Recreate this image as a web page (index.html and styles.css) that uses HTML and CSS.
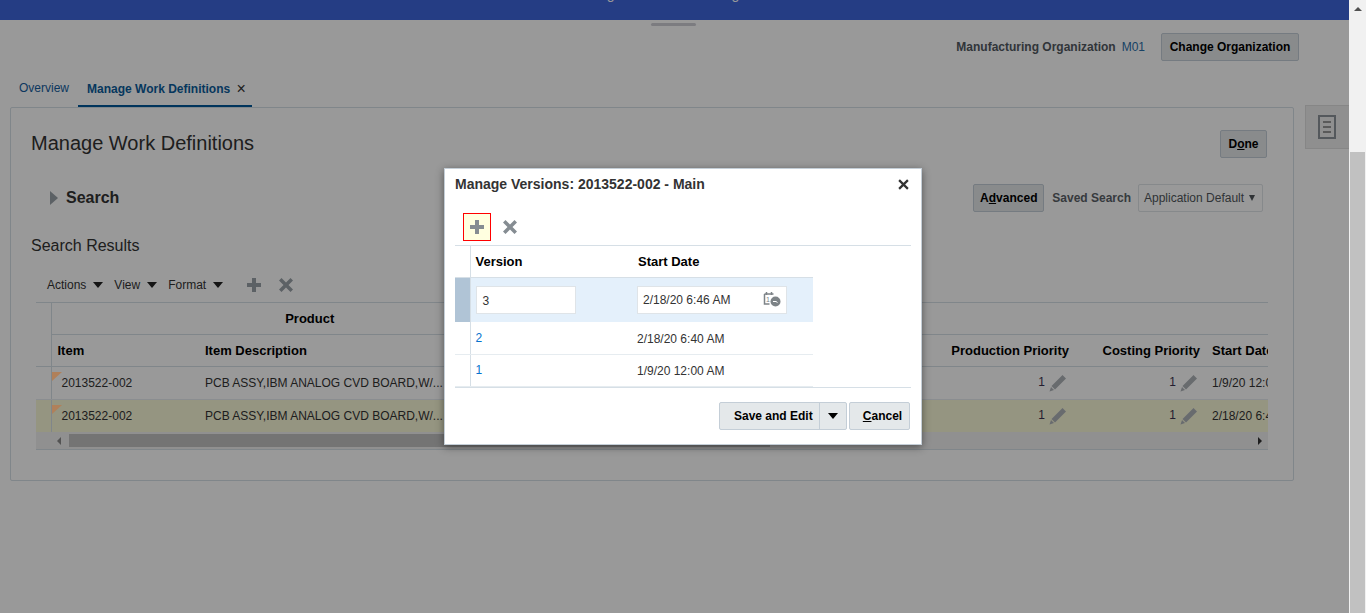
FILE: index.html
```html
<!DOCTYPE html>
<html>
	<head>
		<meta charset="utf-8">
		<title>Manage Work Definitions</title>
		<link rel="stylesheet" href="styles.css">
	</head>
	<body>
		<div class="page">
			<div class="main">
				<div class="banner" aria-hidden="true"><span>g</span><span>g</span></div>
				<div class="handle"></div>
				<div class="org">
					<span class="org-label">Manufacturing Organization</span>
					<span class="org-value">M01</span>
					<button class="btn btn-org">Change Organization</button>
				</div>
				<div class="work">
					<div class="work-left">
						<div class="tabs">
							<a class="tab">Overview</a>
							<a class="tab tab-on">Manage Work Definitions <i class="tab-x">×</i></a>
						</div>
						<div class="panel">
							<div class="panel-head">
								<h1>Manage Work Definitions</h1>
								<button class="btn btn-done">D<u>o</u>ne</button>
							</div>
							<div class="search-row">
								<span class="tri-right"></span>
								<h2>Search</h2>
								<button class="btn btn-adv">A<u>d</u>vanced</button>
								<span class="saved">Saved Search</span>
								<div class="select">Application Default <span class="select-arrow"></span></div>
							</div>
							<h3>Search Results</h3>
							<div class="toolbar">
								<span class="menu">Actions<i class="arrow"></i></span>
								<span class="menu">View<i class="arrow"></i></span>
								<span class="menu">Format<i class="arrow"></i></span>
								<svg class="ic ic-first" viewBox="0 0 16 16"><path d="M6 1h4v5h5v4h-5v5H6v-5H1V6h5z"/></svg>
								<svg class="ic" viewBox="0 0 16 16"><path d="M3.500 1 8 5.500 12.500 1 15 3.500 10.500 8 15 12.500 12.500 15 8 10.500 3.500 15 1 12.500 5.500 8 1 3.500z"/></svg>
							</div>
							<div class="grid-wrap">
								<table class="grid">
									<colgroup>
										<col class="c-head"><col class="c-item"><col class="c-desc"><col class="c-rest"><col class="c-gap"><col class="c-prod"><col class="c-cost"><col class="c-date">
									</colgroup>
									<tr class="group-row">
										<th class="rowhead" rowspan="2"></th>
										<th class="center" colspan="3">Product</th>
										<th colspan="4"></th>
									</tr>
									<tr class="label-row">
										<th class="item-head">Item</th>
										<th>Item Description</th>
										<th></th>
										<th></th>
										<th class="right">Production Priority</th>
										<th class="right">Costing Priority</th>
										<th>Start Date</th>
									</tr>
									<tr>
										<td class="rowhead"></td>
										<td class="flagged">2013522-002</td>
										<td>PCB ASSY,IBM ANALOG CVD BOARD,W/...</td>
										<td></td>
										<td></td>
										<td class="right"><span class="num">1</span><svg class="pencil" viewBox="0 0 18 18"><path d="M13.500 1 17 4.500 6 15.500 2.500 12zM2 13l3 3-4.500 1.500z"/></svg></td>
										<td class="right"><span class="num">1</span><svg class="pencil" viewBox="0 0 18 18"><path d="M13.500 1 17 4.500 6 15.500 2.500 12zM2 13l3 3-4.500 1.500z"/></svg></td>
										<td>1/9/20 12:00 AM</td>
									</tr>
									<tr class="row-on">
										<td class="rowhead"></td>
										<td class="flagged">2013522-002</td>
										<td>PCB ASSY,IBM ANALOG CVD BOARD,W/...</td>
										<td></td>
										<td></td>
										<td class="right"><span class="num">1</span><svg class="pencil" viewBox="0 0 18 18"><path d="M13.500 1 17 4.500 6 15.500 2.500 12zM2 13l3 3-4.500 1.500z"/></svg></td>
										<td class="right"><span class="num">1</span><svg class="pencil" viewBox="0 0 18 18"><path d="M13.500 1 17 4.500 6 15.500 2.500 12zM2 13l3 3-4.500 1.500z"/></svg></td>
										<td>2/18/20 6:46 AM</td>
									</tr>
								</table>
								<div class="hscroll">
									<i class="hs-left"></i>
									<div class="hs-thumb"></div>
									<i class="hs-right"></i>
								</div>
							</div>
						</div>
					</div>
					<div class="side-tab">
						<svg viewBox="0 0 18 24" width="18" height="24"><path d="M1 1h16v22H1z" fill="none" stroke="#8c9399" stroke-width="2"/><path d="M5 7h8M5 12h8M5 17h8" stroke="#969696" stroke-width="2"/></svg>
					</div>
				</div>
				<div class="overlay"></div>
				<div class="modal">
					<div class="modal-title">
						<span>Manage Versions: 2013522-002 - Main</span>
						<svg class="close" viewBox="0 0 10 10"><path d="M1 1l8 8M9 1l-8 8" stroke="#333" stroke-width="2"/></svg>
					</div>
					<div class="modal-tools">
						<span class="tool tool-on"><svg class="ic" viewBox="0 0 16 16"><path d="M6 1h4v5h5v4h-5v5H6v-5H1V6h5z"/></svg></span>
						<span class="tool"><svg class="ic" viewBox="0 0 16 16"><path d="M3.500 1 8 5.500 12.500 1 15 3.500 10.500 8 15 12.500 12.500 15 8 10.500 3.500 15 1 12.500 5.500 8 1 3.500z"/></svg></span>
					</div>
					<div class="versions-wrap">
						<table class="versions">
							<tr class="v-head">
								<th class="v-side"></th>
								<th class="v-ver">Version</th>
								<th class="v-date">Start Date</th>
							</tr>
							<tr class="v-edit">
								<td class="v-side"></td>
								<td class="v-ver"><div class="field field-ver">3</div></td>
								<td class="v-date"><div class="field field-date">2/18/20 6:46 AM
									<svg class="cal" viewBox="0 0 18 16" width="18" height="16"><path d="M1.500 3h9M1.500 3v10h5M3.500 1v3M8.500 1v3" fill="none" stroke="#7d8387" stroke-width="1.500"/><text class="cal-day" x="3" y="11">1</text><circle cx="12.500" cy="10.500" r="5" fill="#7d8387"/><path d="M10 10.500h3l1.500 1" fill="none" stroke="#fff"/></svg>
								</div></td>
							</tr>
							<tr>
								<td class="v-side"></td>
								<td class="v-ver"><a class="link">2</a></td>
								<td class="v-date">2/18/20 6:40 AM</td>
							</tr>
							<tr>
								<td class="v-side"></td>
								<td class="v-ver"><a class="link">1</a></td>
								<td class="v-date">1/9/20 12:00 AM</td>
							</tr>
						</table>
					</div>
					<div class="modal-foot">
						<div class="split">
							<span class="split-main">Save and Edit</span>
							<span class="split-arrow"><i class="arrow arrow-dark"></i></span>
						</div>
						<button class="btn btn-cancel"><u>C</u>ancel</button>
					</div>
				</div>
			</div>
			<div class="vscroll">
				<i class="vs-up"></i>
				<div class="vs-thumb"></div>
			</div>
		</div>
	</body>
</html>
```

FILE: styles.css
```css
*{
	margin: 0;
	padding: 0;
	box-sizing: border-box;
}
body{
	font-family: "Liberation Sans", Arial, sans-serif;
	font-size: 12px;
	color: #333;
	background: #fff;
	overflow: hidden;
}
.page{
	display: flex;
	height: 613px;
	overflow: hidden;
}
.main{
	position: relative;
	flex: 1;
	min-width: 0;
}
.vscroll{
	width: 17px;
	background: #f1f1f1;
	display: flex;
	flex-direction: column;
	align-items: center;
}
.vs-up{
	margin-top: 7px;
	border-left: 4px solid transparent;
	border-right: 4px solid transparent;
	border-bottom: 4px solid #505050;
}
.vs-thumb{
	width: 15px;
	margin-top: 141px;
	flex: 1;
	background: #c1c1c1;
}

/* top of the page */
.banner{
	height: 20px;
	background: #3e66dd;
	overflow: hidden;
	display: flex;
	justify-content: center;
	gap: 117px;
	padding-right: 3px;
	color: #fff;
	font-size: 14px;
	line-height: 14px;
	margin-bottom: 3px;
}
.banner span{
	margin-top: -13px;
}
.handle{
	width: 45px;
	height: 3px;
	margin-left: 651px;
	border-radius: 2px;
	background: #cfcfd6;
}
.org{
	display: flex;
	justify-content: flex-end;
	align-items: center;
	height: 28px;
	margin-top: 7px;
	padding-right: 50px;
}
.org-label{
	font-weight: bold;
	color: #52595f;
}
.org-value{
	margin-left: 6px;
	color: #2a6ea8;
}
.btn{
	font-family: inherit;
	font-size: 12px;
	font-weight: bold;
	color: #000;
	height: 28px;
	border: 1px solid #c4ced7;
	border-radius: 2px;
	background: #e4e8ea;
}
.btn-org{
	width: 138px;
	margin-left: 16px;
}

/* tabs and panel */
.work{
	display: flex;
	gap: 11px;
	margin-top: 11px;
	padding-left: 10px;
}
.work-left{
	width: 1284px;
}
.tabs{
	display: flex;
	height: 35px;
	padding-left: 9px;
}
.tab{
	height: 35px;
	line-height: 33px;
	color: #145c9e;
	margin-right: 9px;
}
.tab-on{
	padding: 0 6px 0 9px;
	font-weight: bold;
	color: #0a5c9c;
	border-bottom: 2px solid #00589a;
}
.tab-x{
	font-style: normal;
	font-weight: normal;
	font-size: 16px;
	color: #333;
	margin-left: 3px;
	vertical-align: -1px;
}
.panel{
	height: 374px;
	border: 1px solid #d6dfe6;
	border-radius: 2px;
	padding: 22px 26px 0 20px;
}
.panel-head{
	display: flex;
	justify-content: space-between;
	align-items: center;
	height: 28px;
}
h1{
	font-size: 20px;
	font-weight: normal;
	margin-top: -2px;
}
.btn-done{
	width: 47px;
}
.search-row{
	display: flex;
	align-items: center;
	height: 28px;
	margin-top: 26px;
	padding-left: 19px;
	margin-right: 4px;
}
.tri-right{
	border-top: 7px solid transparent;
	border-bottom: 7px solid transparent;
	border-left: 8px solid #9aa2a8;
}
h2{
	font-size: 16px;
	margin-left: 8px;
	margin-right: auto;
}
.btn-adv{
	width: 71px;
}
.saved{
	margin-left: 8px;
	font-weight: bold;
	color: #5b6268;
}
.select{
	width: 125px;
	height: 28px;
	margin-left: 7px;
	padding-left: 5px;
	line-height: 26px;
	border: 1px solid #dfe4e8;
	border-radius: 2px;
	color: #50565b;
	background: #fff;
}
.select-arrow{
	display: inline-block;
	margin-left: 2px;
	vertical-align: 1px;
	border-left: 3px solid transparent;
	border-right: 3px solid transparent;
	border-top: 6px solid #50565b;
}
h3{
	font-size: 16px;
	font-weight: normal;
	line-height: 18px;
	margin-top: 25px;
}
.toolbar{
	display: flex;
	align-items: center;
	height: 22px;
	margin-top: 19px;
	padding-left: 16px;
}
.toolbar .ic{
	fill: #9aa2a8;
}
.menu{
	display: flex;
	align-items: center;
	margin-right: 11px;
}
.arrow{
	display: block;
	margin-left: 7px;
	border-left: 5px solid transparent;
	border-right: 5px solid transparent;
	border-top: 6px solid #222;
}
.ic{
	width: 16px;
	height: 16px;
	fill: #858c92;
	margin-right: 16px;
	display: block;
}
.ic-first{
	margin-left: 12px;
}

/* results table */
.grid-wrap{
	width: 1232px;
	margin-left: 5px;
	margin-top: 6px;
	overflow: hidden;
	border-top: 1px solid #d6dfe6;
	border-bottom: 1px solid #d6dfe6;
}
.grid{
	width: 1270px;
	table-layout: fixed;
	border-collapse: collapse;
}
.c-head{width: 15px;}
.c-item{width: 149px;}
.c-desc{width: 245px;}
.c-rest{width: 124px;}
.c-gap{width: 361px;}
.c-prod{width: 145px;}
.c-cost{width: 131px;}
.c-date{width: 100px;}
.grid th{
	height: 32px;
	padding: 0 6px 0 5px;
	text-align: left;
	font-size: 13px;
	color: #000;
	border-bottom: 1px solid #d6dfe6;
	white-space: nowrap;
	overflow: hidden;
}
.grid .group-row th{
	height: 31px;
}
.grid td{
	height: 33px;
	padding: 0 6px 0 5px;
	border-bottom: 1px solid #e6ecf0;
	white-space: nowrap;
	overflow: hidden;
}
.grid tr > :last-child{
	padding-left: 6px;
}
.grid .center{
	text-align: center;
}
.grid .right{
	text-align: right;
}
.grid td.right{
	padding-right: 8px;
}
.grid .rowhead{
	padding: 0;
	border-right: 1px solid #d6dfe6;
}
.grid th.item-head{
	padding-left: 6px;
}
.grid td.flagged{
	position: relative;
	padding-left: 10px;
}
/* sits above the dimming layer, it keeps its brighter colour there */
.flagged:before{
	content: "";
	position: absolute;
	z-index: 1;
	left: 0;
	top: 5px;
	border-top: 9px solid #b0805a;
	border-right: 10px solid transparent;
}
.row-on td{
	background: #f9f8d8;
	border-bottom: 0;
}
.num{
	color: #3b3350;
	margin-right: 4px;
}
.pencil{
	width: 18px;
	height: 18px;
	fill: #aeb3b8;
	vertical-align: middle;
}
.hscroll{
	display: flex;
	align-items: center;
	height: 17px;
	background: #f0f0f0;
	padding-left: 16px;
}
.hs-left{
	margin-left: 5px;
	border-top: 4px solid transparent;
	border-bottom: 4px solid transparent;
	border-right: 4px solid #8a8a8a;
}
.hs-thumb{
	width: 701px;
	height: 13px;
	margin-left: 8px;
	background: #c1c1c1;
}
.hs-right{
	margin-left: auto;
	margin-right: 6px;
	border-top: 4px solid transparent;
	border-bottom: 4px solid transparent;
	border-left: 4px solid #333;
}
.side-tab{
	width: 44px;
	height: 44px;
	margin-top: 33px;
	padding-right: 2px;
	background: #efefef;
	border: 1px solid #e0e0e0;
	border-right: 0;
	display: flex;
	align-items: center;
	justify-content: center;
}

/* dialog */
.overlay{
	position: absolute;
	inset: 0;
	background: rgba(0,0,0,0.4);
}
.modal{
	position: absolute;
	z-index: 2;
	left: 444px;
	top: 168px;
	width: 478px;
	height: 277px;
	padding: 0 10px;
	background: #fff;
	border: 1px solid #c4ced7;
	box-shadow: 0 2px 8px rgba(0,0,0,0.45);
}
.modal-title{
	display: flex;
	justify-content: space-between;
	align-items: center;
	height: 30px;
	font-size: 14px;
	font-weight: bold;
}
.close{
	width: 11px;
	height: 11px;
	margin-right: 2px;
}
.modal-tools{
	display: flex;
	align-items: flex-start;
	height: 47px;
	padding-top: 14px;
	padding-left: 8px;
	border-bottom: 1px solid #d6dfe6;
}
.tool{
	display: flex;
	align-items: center;
	justify-content: center;
	width: 28px;
	height: 28px;
	margin-right: 5px;
}
.tool .ic{
	margin: 0;
}
.tool-on{
	border: 1px solid #f00;
	background: #ffffe0;
}
.versions-wrap{
	height: 142px;
	border-bottom: 1px solid #d6dfe6;
}
.versions{
	width: 358px;
	table-layout: fixed;
	border-collapse: collapse;
}
.versions th{
	height: 31px;
	text-align: left;
	font-size: 13px;
	color: #000;
	border-bottom: 1px solid #d6dfe6;
}
.versions td{
	height: 32px;
	border-bottom: 1px solid #e6ecf0;
}
.v-side{
	width: 15px;
	border-right: 1px solid #d6dfe6;
}
.v-ver{
	width: 167px;
	padding-left: 5px;
}
.versions .v-date{
	padding-left: 0;
	padding-top: 2px;
}
.versions .v-head .v-date{
	padding: 0 0 0 1px;
}
.versions .v-edit td{
	height: 45px;
	padding-top: 0;
	background: #e4f0fb;
	border-bottom: 0;
}
.versions .v-edit .v-side{
	background: #b0c4d6;
}
.field{
	height: 28px;
	line-height: 26px;
	padding-left: 5px;
	background: #fff;
	border: 1px solid #dfe4e8;
}
.field-ver{
	width: 100px;
	padding-left: 6px;
	line-height: 28px;
}
.field-date{
	display: flex;
	align-items: center;
	justify-content: space-between;
	width: 150px;
	padding-right: 6px;
}
.cal{
	margin: -2px -1px 0 0;
}
.cal-day{
	font-size: 7px;
	fill: #7d8387;
}
.link{
	color: #0572ce;
}
.modal-foot{
	display: flex;
	justify-content: flex-end;
	gap: 2px;
	margin-top: 14px;
	margin-right: 1px;
}
.split{
	display: flex;
	width: 128px;
	height: 28px;
	border: 1px solid #c4ced7;
	border-radius: 2px;
	background: #e4e8ea;
	font-weight: bold;
	color: #000;
	line-height: 26px;
}
.split-main{
	flex: 1;
	padding-left: 14px;
	border-right: 1px solid #c4ced7;
}
.split-arrow{
	display: flex;
	align-items: center;
	justify-content: center;
	width: 26px;
}
.arrow-dark{
	margin: 0;
	border-top-color: #000;
}
.btn-cancel{
	width: 61px;
	padding-left: 6px;
}
```
